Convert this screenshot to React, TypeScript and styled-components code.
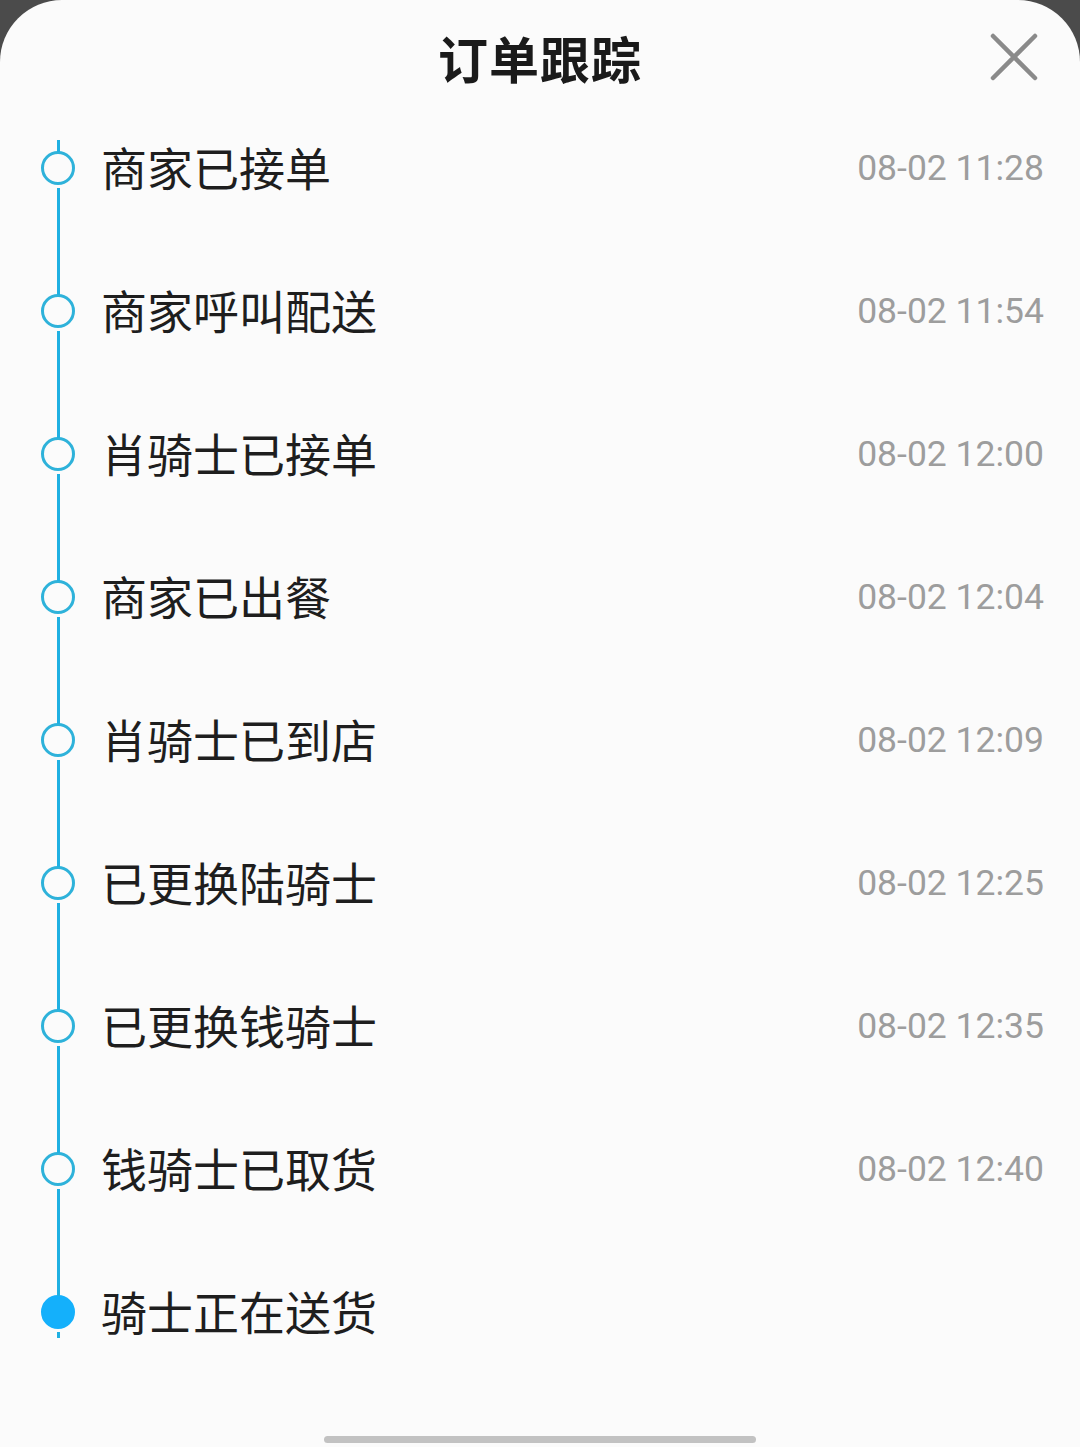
import React from "react";
import styled, { createGlobalStyle, css } from "styled-components";

const steps = [
  { label: "商家已接单", time: "08-02 11:28" },
  { label: "商家呼叫配送", time: "08-02 11:54" },
  { label: "肖骑士已接单", time: "08-02 12:00" },
  { label: "商家已出餐", time: "08-02 12:04" },
  { label: "肖骑士已到店", time: "08-02 12:09" },
  { label: "已更换陆骑士", time: "08-02 12:25" },
  { label: "已更换钱骑士", time: "08-02 12:35" },
  { label: "钱骑士已取货", time: "08-02 12:40" },
  { label: "骑士正在送货", time: "" },
];

function App() {
  return (
    <>
      <GlobalStyle />
      <Sheet>
        <Header>
          <span />
          <Title>订单跟踪</Title>
          <CloseButton aria-label="关闭">
            <svg width="48" height="48" viewBox="0 0 48 48">
              <path
                d="M3 3 L45 45 M45 3 L3 45"
                stroke="#8a8a8a"
                strokeWidth="4.5"
                strokeLinecap="round"
                fill="none"
              />
            </svg>
          </CloseButton>
        </Header>

        <Timeline>
          {steps.map((step, i) => (
            <Step key={step.label}>
              <Node
                $first={i === 0}
                $last={i === steps.length - 1}
              >
                <Dot $active={i === steps.length - 1} />
              </Node>
              <Label>{step.label}</Label>
              <Time>{step.time}</Time>
            </Step>
          ))}
        </Timeline>

        <HomeBar />
      </Sheet>
    </>
  );
}

export default App;

const GlobalStyle = createGlobalStyle`
  html, body {
    margin: 0;
    padding: 0;
    background: #4b4b4b;
  }
  body {
    font-family: "Noto Sans CJK SC", "Noto Sans", sans-serif;
  }
`;

const Sheet = styled.div`
  min-height: 1447px;
  box-sizing: border-box;
  background: #fbfbfb;
  border-radius: 62px 62px 0 0;
  display: flex;
  flex-direction: column;
`;

const Header = styled.div`
  height: 96px;
  box-sizing: border-box;
  padding: 18px 42px 0 42px;
  display: grid;
  grid-template-columns: 1fr auto 1fr;
  align-items: center;
`;

const Title = styled.h1`
  margin: 0;
  font-size: 50px;
  line-height: 1;
  font-weight: 700;
  color: #1a1a1a;
  letter-spacing: 1px;
`;

const CloseButton = styled.button`
  justify-self: end;
  width: 48px;
  height: 48px;
  padding: 0;
  border: none;
  background: none;
  display: flex;
  align-items: center;
  justify-content: center;
`;

const Timeline = styled.div`
  display: flex;
  flex-direction: column;
  padding: 0 36px 0 40px;
`;

const Step = styled.div`
  height: 143px;
  display: grid;
  grid-template-columns: 36px 1fr auto;
  column-gap: 25px;
  align-items: center;
`;

const Node = styled.div<{ $first: boolean; $last: boolean }>`
  position: relative;
  height: 100%;
  display: flex;
  align-items: center;
  justify-content: center;

  &::before,
  &::after {
    content: "";
    position: absolute;
    left: 50%;
    width: 3px;
    margin-left: -1.5px;
    background: #1fb0e2;
  }

  &::before {
    top: ${(p) => (p.$first ? "calc(50% - 28px)" : "0")};
    bottom: calc(50% + 16px);
  }

  &::after {
    top: calc(50% + 20px);
    bottom: 0;
    ${(p) =>
      p.$last &&
      css`
        bottom: auto;
        height: 6px;
      `}
  }
`;

const Dot = styled.div<{ $active: boolean }>`
  width: 34px;
  height: 34px;
  box-sizing: border-box;
  border-radius: 50%;
  border: 3px solid #2eb2da;
  background: transparent;

  ${(p) =>
    p.$active &&
    css`
      border-color: #14b0fb;
      background: #14b0fb;
    `}
`;

const Label = styled.div`
  font-size: 46px;
  line-height: 1;
  color: #1e1e1e;
  white-space: nowrap;
  margin-top: -3px;
`;

const Time = styled.div`
  font-family: Roboto, "Noto Sans", sans-serif;
  font-size: 35.5px;
  line-height: 1;
  color: #9d9d9d;
  white-space: nowrap;
  margin-top: 2px;
`;

const HomeBar = styled.div`
  margin: auto auto 4px;
  width: 432px;
  height: 7px;
  border-radius: 4px;
  background: #c2c2c2;
`;
